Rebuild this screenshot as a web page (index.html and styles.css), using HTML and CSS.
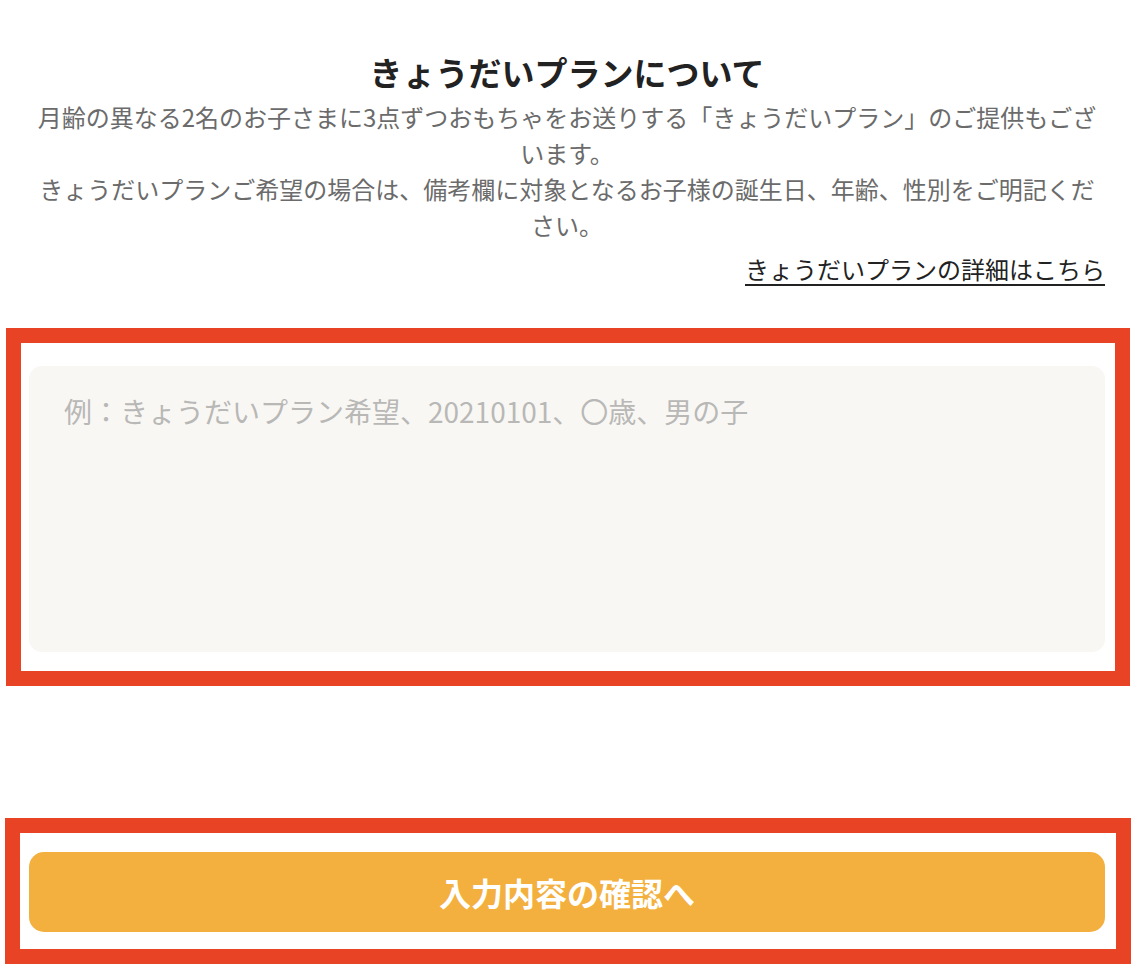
FILE: index.html
```html
<!DOCTYPE html>
<html lang="ja">
<head>
<meta charset="utf-8">
<title>きょうだいプランについて</title>
<link rel="stylesheet" href="styles.css">
</head>
<body>
<main class="page">
  <section class="plan-info">
    <h1 class="plan-title">きょうだいプランについて</h1>
    <p class="plan-desc">月齢の異なる2名のお子さまに3点ずつおもちゃをお送りする「きょうだいプラン」のご提供もございます。<br>きょうだいプランご希望の場合は、備考欄に対象となるお子様の誕生日、年齢、性別をご明記ください。</p>
    <div class="plan-link-row"><a class="plan-link" href="#">きょうだいプランの詳細はこちら</a></div>
  </section>
  <div class="note-field annotated annotated-note">
    <textarea class="note-input" placeholder="例：きょうだいプラン希望、20210101、〇歳、男の子"></textarea>
  </div>
  <div class="submit-field annotated annotated-submit">
    <button class="submit-btn" type="button">入力内容の確認へ</button>
  </div>
</main>
</body>
</html>
```

FILE: styles.css
```css
* {
  box-sizing: border-box;
}

html, body {
  margin: 0;
  padding: 0;
  background: #ffffff;
}

body {
  font-family: "Noto Sans CJK JP", "Noto Sans", sans-serif;
  color: #222222;
}

.page {
  padding: 50px 29px 40px;
  display: flex;
  flex-direction: column;
}

.plan-info {
  display: flex;
  flex-direction: column;
}

.plan-title {
  margin: 0 0 4px;
  font-size: 33px;
  line-height: 45px;
  font-weight: 700;
  text-align: center;
  color: #222222;
}

.plan-desc {
  margin: 0;
  font-size: 24px;
  line-height: 36px;
  color: #6b6b6b;
  text-align: center;
}

.plan-link-row {
  margin-top: 8px;
  text-align: right;
  font-size: 24px;
  line-height: 36px;
}

.plan-link {
  color: #222222;
  text-decoration: underline;
  text-underline-offset: 5px;
  text-decoration-thickness: 2px;
}

.annotated {
  position: relative;
}

.annotated::before {
  content: "";
  position: absolute;
  border: 15px solid #e94326;
  pointer-events: none;
}

.annotated-note::before {
  top: -38px;
  left: -23px;
  right: -25px;
  bottom: -34px;
}

.annotated-submit::before {
  top: -34px;
  left: -24px;
  right: -26px;
  bottom: -32px;
}

.note-field {
  margin-top: 79px;
  display: flex;
}

.note-input {
  display: block;
  width: 100%;
  height: 286px;
  border: none;
  outline: none;
  resize: none;
  background: #f8f7f4;
  border-radius: 13px;
  padding: 24px 35px;
  font-family: "Noto Sans CJK JP", "Noto Sans", sans-serif;
  font-size: 28px;
  line-height: 42px;
  color: #333333;
}

.note-input::placeholder {
  color: #b8b8b6;
  opacity: 1;
}

.submit-field {
  margin-top: 200px;
  display: flex;
}

.submit-btn {
  width: 100%;
  height: 80px;
  border: none;
  border-radius: 15px;
  background: #f3b03e;
  color: #ffffff;
  font-family: "Noto Sans CJK JP", "Noto Sans", sans-serif;
  font-size: 32px;
  font-weight: 700;
  cursor: pointer;
}
```
